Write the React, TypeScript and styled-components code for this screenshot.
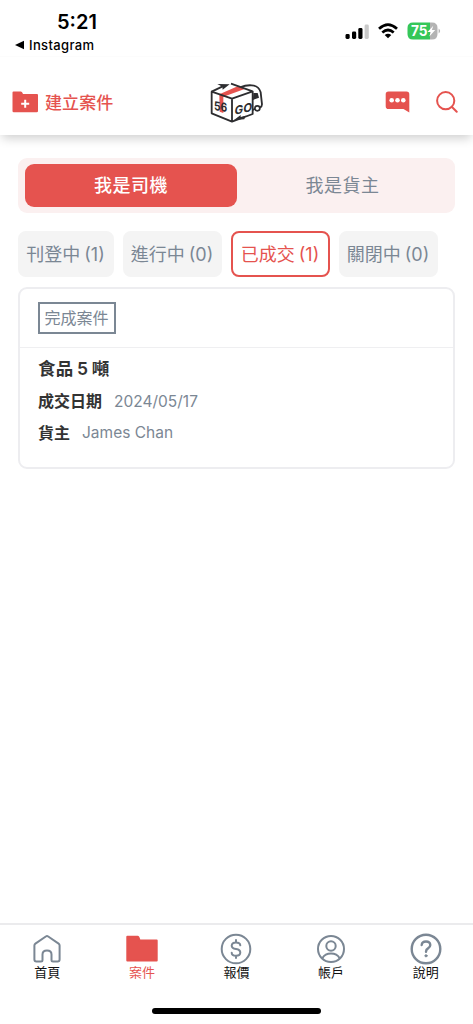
import React from "react";
import styled, { createGlobalStyle } from "styled-components";

const red = "#e5534f";
const slate = "#7b8794";
const ink = "#333333";

const GlobalStyle = createGlobalStyle`
  * { box-sizing: border-box; }
  body {
    margin: 0;
    background: #fff;
    font-family: Inter, "Noto Sans CJK TC", sans-serif;
    -webkit-font-smoothing: antialiased;
  }
  button { font: inherit; border: 0; background: none; padding: 0; }
  svg { display: block; flex: none; }
`;

const Screen = styled.div`
  width: 100%;
  height: 1024px;
  display: flex;
  flex-direction: column;
  overflow: hidden;
`;

const StatusBar = styled.div`
  height: 57px;
  flex: none;
  display: flex;
  justify-content: space-between;
  padding: 12px 32px 0 15px;
  border-bottom: 1px solid #fcfcfc;
  color: #000;
`;

const Clock = styled.div`
  font-size: 20px;
  line-height: 20px;
  font-weight: 600;
  padding-left: 42px;
  letter-spacing: 0;
`;

const BackLink = styled.div`
  display: flex;
  align-items: center;
  gap: 5px;
  margin-top: 5px;
  font-size: 13px;
  line-height: 16px;
  font-weight: 500;
  letter-spacing: 0.35px;
`;

const StatusIcons = styled.div`
  display: flex;
  align-items: center;
  height: 18px;
  margin-top: 10px;
`;

const SignalIcon = styled.svg`
  margin-right: 9px;
`;

const WifiIcon = styled.svg`
  margin-right: 9px;
`;

const Header = styled.header`
  height: 78px;
  flex: none;
  display: grid;
  grid-template-columns: 1fr 56px 1fr;
  align-items: center;
  padding: 12px 15px 0 12px;
  box-shadow: 0 5px 10px -2px rgba(0, 0, 0, 0.2);
  clip-path: inset(0 0 -20px 0);
`;

const CreateButton = styled.button`
  display: flex;
  align-items: center;
  gap: 6px;
  color: ${red};
  font-size: 17px;
  line-height: 24px;
  font-weight: 500;
  letter-spacing: 0.1px;
`;

const CreateLabel = styled.span`
  padding-top: 1px;
`;

const HeaderActions = styled.div`
  display: flex;
  justify-content: flex-end;
  align-items: center;
  gap: 26px;
`;

const Main = styled.main`
  flex: 1;
  padding: 23px 18px 0;
`;

const RoleSwitch = styled.div`
  height: 55px;
  display: grid;
  grid-template-columns: 212px 1fr;
  padding: 6px 7px;
  border-radius: 9px;
  background: #fbf0f0;
`;

const RoleButton = styled.button<{ $active?: boolean }>`
  height: 43px;
  padding-bottom: 3px;
  border-radius: 9px;
  background: ${(p) => (p.$active ? red : "transparent")};
  color: ${(p) => (p.$active ? "#fff" : slate)};
  font-size: 18px;
  font-weight: ${(p) => (p.$active ? 500 : 400)};
  letter-spacing: 0.5px;
`;

const FilterRow = styled.div`
  display: flex;
  gap: 9px;
  margin-top: 18px;
`;

const FilterTab = styled.button<{ $active?: boolean; $narrow?: boolean }>`
  width: ${(p) => (p.$narrow ? 96 : 99)}px;
  height: 46px;
  padding: 0 1px 2px 0;
  border-radius: 8px;
  border: 2px solid ${(p) => (p.$active ? red : "#f4f4f4")};
  background: ${(p) => (p.$active ? "#fff" : "#f4f4f4")};
  color: ${(p) => (p.$active ? red : slate)};
  font-size: 18px;
  white-space: nowrap;
  word-spacing: -1px;
`;

const Card = styled.article`
  height: 182px;
  margin-top: 10px;
  border: 2px solid #ededf0;
  border-radius: 9px;
`;

const CardTop = styled.div`
  height: 59px;
  padding: 13px 18px;
  border-bottom: 1px solid #efeff1;
`;

const Badge = styled.span`
  display: flex;
  width: 78px;
  height: 32px;
  align-items: center;
  justify-content: center;
  padding: 0 1px 3px 0;
  border: 2px solid ${slate};
  color: ${slate};
  font-size: 16px;
`;

const CardBody = styled.div`
  padding: 8px 18px;
  color: ${ink};
`;

const CardTitle = styled.h2`
  margin: 0;
  font-size: 17.5px;
  line-height: 26px;
  font-weight: 600;
  letter-spacing: 0.2px;
  word-spacing: -1px;
`;

const Field = styled.div`
  display: flex;
  align-items: center;
  gap: 12px;
  height: 26px;
  margin-top: 5.5px;
  font-size: 16px;
`;

const FieldLabel = styled.span`
  font-weight: 600;
  margin-top: -1px;
`;

const FieldValue = styled.span`
  padding-top: 1px;
  color: ${slate};
  font-size: 15.5px;
`;

const TabBar = styled.nav`
  height: 80px;
  flex: none;
  display: grid;
  grid-template-columns: repeat(5, 1fr);
  border-top: 2px solid #ebebed;
`;

const TabItem = styled.button<{ $active?: boolean }>`
  display: flex;
  flex-direction: column;
  align-items: center;
  padding-top: 8px;
  color: ${(p) => (p.$active ? red : "#111")};
  font-size: 13px;
  line-height: 15px;
  font-weight: 400;
`;

const TabIcon = styled.svg.attrs({
  width: 32,
  height: 32,
  viewBox: "0 0 32 32",
  fill: "none",
  stroke: slate,
  strokeWidth: 2,
  strokeLinecap: "round",
  strokeLinejoin: "round",
})``;

const HomeIndicator = styled.div`
  width: 169px;
  height: 6px;
  flex: none;
  margin: 5px auto 10px;
  border-radius: 3px;
  background: #000;
`;

const Logo = () => (
  <svg width="56" height="42" viewBox="3 9 168 126" fill="none" stroke="#2d2d30" strokeWidth="5.5" strokeLinejoin="round">
    <path d="M40 49 95 25 118 32 52 56V105L41 101Z" fill={red} stroke="none" />
    <path d="M17 41 78 62 140 40V108L78 131 17 106Z M78 62V131 M75 17 140 40" />
    <path d="M17 41 50 25" />
    <path d="M34 18 71 19 50 35 49 26Z" fill="#2d2d30" stroke="none" />
    <path d="M84 126 104 111 104 117 119 113 115 124Z" fill="#2d2d30" stroke="none" />
    <path d="M104 27Q119 21 137 22 158 23 164 43L168 79Q168 86 162 89M140 96 148 92" />
    <path d="M142 45 155 45 159 59 141 66Z" fill="#2d2d30" stroke="none" />
    <circle cx="154" cy="91" r="7.5" strokeWidth="5" />
    <g fill="#2d2d30" stroke="none" fontFamily="Inter, sans-serif" fontWeight="700">
      <text fontSize="37" textLength="40" lengthAdjust="spacingAndGlyphs" transform="matrix(1 .16 0 1 24 96)">56</text>
      <text fontSize="36" textLength="52" lengthAdjust="spacingAndGlyphs" transform="matrix(1 -.24 -.1 1 85 111)">GO</text>
    </g>
  </svg>
);

export default function App() {
  return (
    <>
      <GlobalStyle />
      <Screen>
        <StatusBar>
          <div>
            <Clock>5:21</Clock>
            <BackLink>
              <svg width="9" height="10" viewBox="0 0 9 10"><path d="M0 5 9 .7V9.3Z" /></svg>
              Instagram
            </BackLink>
          </div>
          <StatusIcons>
            <SignalIcon width="24" height="16" viewBox="0 0 24 16">
              <rect x="0.5" y="11" width="4.2" height="5" rx="1.4" />
              <rect x="7" y="8.5" width="4.2" height="7.5" rx="1.4" />
              <rect x="13.3" y="5" width="4.2" height="11" rx="1.4" />
              <rect x="19.6" y="1.5" width="4.2" height="14.5" rx="1.4" fill="#c9c9c9" />
            </SignalIcon>
            <WifiIcon width="20" height="16" viewBox="0 0 20 16" fill="none" stroke="#000" strokeWidth="2.7">
              <path d="M1 5.8Q10-2.4 19 5.8M4.3 9.5Q10 4.5 15.7 9.5" />
              <path d="M6.7 12Q10 9.4 13.3 12L10 15.3Z" fill="#000" stroke="none" />
            </WifiIcon>
            <svg width="34" height="18" viewBox="0 0 34 18">
              <path d="M6 .5H23V17.5H6Q.5 17.5 .5 12V6Q.5.5 6 .5Z" fill="#35c759" />
              <path d="M23 .5H25Q30.5.5 30.5 6V12Q30.5 17.5 25 17.5H23Z" fill="#b3b3b3" />
              <path d="M31.6 6.5Q34.6 9 31.6 11.5Z" fill="#b3b3b3" />
              <text x="4" y="14" fontFamily="Inter" fontSize="14" fontWeight="700" fill="#fff" textLength="16.5" lengthAdjust="spacingAndGlyphs">75</text>
              <path d="M26.3 3.8 20.5 10H23.8L22.3 14.5 28.2 8.1H24.9Z" fill="#fff" />
            </svg>
          </StatusIcons>
        </StatusBar>

        <Header>
          <CreateButton>
            <svg width="27" height="22" viewBox="0 0 27 22">
              <path d="M1.5.5H9Q10.2.5 11 3H25Q26 3 26 4V20Q26 21.3 24.7 21.3H1.8Q.5 21.3.5 20V1.5Q.5.5 1.5.5Z" fill={red} />
              <path d="M13.2 8.7V16.7M9.2 12.7H17.2" stroke="#fff" strokeWidth="2" />
            </svg>
            <CreateLabel>建立案件</CreateLabel>
          </CreateButton>
          <Logo />
          <HeaderActions>
            <svg width="25" height="22" viewBox="0 0 25 22">
              <path d="M3.5.5H21.5Q24.3.5 24.3 3.3V21.5L18.5 18H3.5Q.7 18 .7 15.2V3.3Q.7.5 3.5.5Z" fill={red} />
              <g fill="#fff"><circle cx="6.7" cy="9.3" r="2.3" /><circle cx="12.5" cy="9.3" r="2.3" /><circle cx="18.3" cy="9.3" r="2.3" /></g>
            </svg>
            <svg width="22" height="22" viewBox="0 0 22 22" fill="none" stroke={red} strokeWidth="2" strokeLinecap="round">
              <circle cx="9.7" cy="9.7" r="8.6" /><path d="M16 16 20.7 20.7" />
            </svg>
          </HeaderActions>
        </Header>

        <Main>
          <RoleSwitch>
            <RoleButton $active>我是司機</RoleButton>
            <RoleButton>我是貨主</RoleButton>
          </RoleSwitch>
          <FilterRow>
            <FilterTab $narrow>刊登中 (1)</FilterTab>
            <FilterTab>進行中 (0)</FilterTab>
            <FilterTab $active>已成交 (1)</FilterTab>
            <FilterTab>關閉中 (0)</FilterTab>
          </FilterRow>
          <Card>
            <CardTop><Badge>完成案件</Badge></CardTop>
            <CardBody>
              <CardTitle>食品 5 噸</CardTitle>
              <Field><FieldLabel>成交日期</FieldLabel><FieldValue>2024/05/17</FieldValue></Field>
              <Field><FieldLabel>貨主</FieldLabel><FieldValue>James Chan</FieldValue></Field>
            </CardBody>
          </Card>
        </Main>

        <TabBar>
          <TabItem>
            <TabIcon><path d="M3.4 12.5Q3.4 11.3 4.4 10.6L14.8 3.5Q16 2.7 17.2 3.5L27.6 10.6Q28.6 11.3 28.6 12.5V26.5Q28.6 28.5 26.6 28.5H22Q20.5 28.5 20.5 27V21.5Q20.5 17.5 16 17.5T11.5 21.5V27Q11.5 28.5 10 28.5H5.4Q3.4 28.5 3.4 26.5Z" /></TabIcon>
            首頁
          </TabItem>
          <TabItem $active>
            <TabIcon><path d="M1.3 3.7H11.7Q12.6 3.7 13.5 7.4H30.7V27.5H1.3Z" fill={red} stroke={red} /></TabIcon>
            案件
          </TabItem>
          <TabItem>
            <TabIcon><circle cx="16" cy="16" r="14.3" /><path d="M20.3 12.3Q20 9.5 16 9.5T11.7 12.7Q11.7 15.3 16 16T20.3 19.5Q20.3 22.7 16 22.7T11.7 19.7M16 7V9.5M16 22.7V25" /></TabIcon>
            報價
          </TabItem>
          <TabItem>
            <TabIcon><circle cx="16" cy="16" r="13" /><circle cx="16" cy="13" r="4.7" /><path d="M7.3 25.2Q10 20.5 16 20.5T24.7 25.2" /></TabIcon>
            帳戶
          </TabItem>
          <TabItem>
            <TabIcon><circle cx="16" cy="16" r="14.3" strokeWidth="2.4" /><path d="M11.7 12Q12 8.5 16 8.5T20.3 12Q20.3 14 18 15.4 16 16.5 16 18.7" strokeWidth="2.4" /><circle cx="16" cy="22.8" r="1.1" fill={slate} strokeWidth="1" /></TabIcon>
            說明
          </TabItem>
        </TabBar>
        <HomeIndicator />
      </Screen>
    </>
  );
}
